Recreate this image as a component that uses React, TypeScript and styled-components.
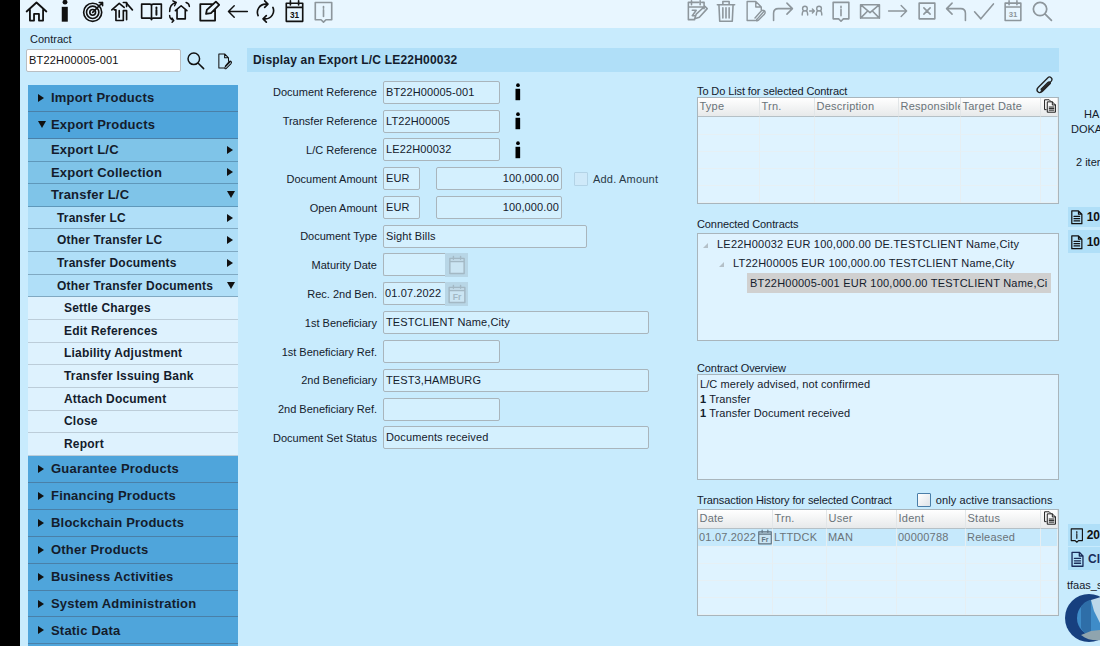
import React from "react";
import styled, { createGlobalStyle, css } from "styled-components";

const GlobalStyle = createGlobalStyle`
  html, body { margin: 0; padding: 0; height: 100%; overflow: hidden; background: #000; }
  body { font-family: "Liberation Sans", Arial, sans-serif; font-size: 11px; color: #14202c; }
`;

const Shell = styled.div`
  display: flex;
  box-sizing: border-box;
  width: 1100px;
  height: 646px;
  padding-left: 20px;
  overflow: hidden;
  background: #000;
`;

const Page = styled.div`
  flex: 1;
  min-width: 0;
  display: flex;
  flex-direction: column;
  background: #c8ebfd;
`;

const Toolbar = styled.header`
  height: 28px;
  flex: none;
  display: flex;
  align-items: flex-start;
  padding: 0 44px 0 2px;
  background: #e8f6ff;
`;

const ToolGroup = styled.div<{ $right?: boolean }>`
  display: flex;
  ${({ $right }) => $right && css`margin-left: auto;`}
`;

const ToolButton = styled.span<{ $muted?: boolean }>`
  width: 28.7px;
  height: 22px;
  display: flex;
  align-items: center;
  justify-content: center;
  color: ${({ $muted }) => ($muted ? "#8d969c" : "#111")};
`;

const Content = styled.div`
  flex: 1;
  min-height: 0;
  display: flex;
`;

const Sidebar = styled.aside`
  width: 227px;
  flex: none;
`;

const ContractLabel = styled.div`
  margin: 5px 0 0 10px;
  height: 12px;
  line-height: 12px;
`;

const ContractRow = styled.div`
  display: flex;
  align-items: center;
  margin: 4px 0 13px 6px;
  color: #111;
`;

const ContractInput = styled.div`
  box-sizing: border-box;
  width: 155px;
  height: 23px;
  line-height: 20px;
  padding-left: 2px;
  background: #fff;
  border: 1.5px solid #b9bec2;
  border-radius: 2px;
  letter-spacing: 0.2px;
`;

const SearchSlot = styled.span`
  display: flex;
  margin-left: 5px;
`;

const DocSlot = styled.span`
  display: flex;
  margin-left: 10px;
`;

const Menu = styled.nav`
  margin-left: 8px;
  width: 210px;
`;

const levelStyles = {
  0: css`height: 26.95px; background: #4fa5db; padding-left: 23px; font-size: 13px;`,
  1: css`height: 22.65px; background: #7fc4e8; padding-left: 23px; font-size: 13px;`,
  2: css`height: 22.65px; background: #b0dff8; padding-left: 29px; font-size: 12px;`,
  3: css`height: 22.65px; background: #def2fe; padding-left: 36px; font-size: 12px;`,
};

const MenuRow = styled.div<{ $level: 0 | 1 | 2 | 3 }>`
  box-sizing: border-box;
  position: relative;
  display: flex;
  align-items: center;
  font-weight: bold;
  letter-spacing: 0.2px;
  color: #141c2c;
  ${({ $level }) => levelStyles[$level]}
  border-bottom: 1.5px solid ${({ $level }) =>
    $level === 0 ? "#4a80a8" : $level === 1 ? "#5f98ba" : $level === 2 ? "#80a9c2" : "#bccdd9"};
`;

const Arrow = styled.i<{ $open?: boolean; $side?: boolean }>`
  position: absolute;
  width: 0;
  height: 0;
  top: 50%;
  ${({ $side, $open }) => ($side ? css`right: ${$open ? 3 : 5}px;` : css`left: 10px;`)}
  ${({ $open }) =>
    $open
      ? css`
          border-left: 4.5px solid transparent;
          border-right: 4.5px solid transparent;
          border-top: 7px solid #111;
          transform: translateY(-4px);
        `
      : css`
          border-top: 4px solid transparent;
          border-bottom: 4px solid transparent;
          border-left: 6.5px solid #111;
          transform: translateY(-4px);
        `}
`;

const Main = styled.main`
  width: 812px;
  flex: none;
`;

const TitleBar = styled.h1`
  margin: 20px 0 0;
  height: 24px;
  line-height: 24px;
  padding-left: 6px;
  background: #b0dff8;
  font-size: 12px;
  font-weight: bold;
  letter-spacing: 0.2px;
  color: #141c2c;
`;

const Columns = styled.div`
  display: flex;
`;

const FormColumn = styled.section`
  width: 450px;
  flex: none;
  padding-top: 6px;
`;

const FormRow = styled.div`
  height: 28.8px;
  display: flex;
  align-items: center;
`;

const FieldLabel = styled.label`
  width: 130px;
  flex: none;
  text-align: right;
  margin-right: 6px;
`;

const Field = styled.div<{ $w: number; $right?: boolean }>`
  box-sizing: border-box;
  width: ${({ $w }) => $w}px;
  height: 23px;
  line-height: 20px;
  padding: 0 2px;
  background: #d4f0fe;
  border: 1.5px solid #a9b5bc;
  border-radius: 2px;
  letter-spacing: 0.12px;
  white-space: nowrap;
  text-align: ${({ $right }) => ($right ? "right" : "left")};
`;

const InfoMark = styled.span`
  display: flex;
  margin-left: 8px;
  color: #000;
`;

const AmountGap = styled.span`
  width: 16px;
  flex: none;
`;

const Check = styled.span<{ $strong?: boolean }>`
  box-sizing: border-box;
  display: inline-block;
  width: 14px;
  height: 14px;
  flex: none;
  border: 1.5px solid ${({ $strong }) => ($strong ? "#4a7ea8" : "#b3d3e6")};
  border-radius: 1px;
  background: ${({ $strong }) => ($strong ? "linear-gradient(135deg,#fff,#dde3e8)" : "#cfe9f9")};
`;

const AddAmount = styled.div`
  display: flex;
  align-items: center;
  margin-left: 12px;
  gap: 5px;
  letter-spacing: 0.2px;
  color: #2a3a48;
`;

const DateWrap = styled.div`
  display: flex;
`;

const DateField = styled(Field)`
  border-radius: 2px 0 0 2px;
  border-right: none;
  padding: 0 1px;
`;

const DateButton = styled.span`
  box-sizing: border-box;
  width: 23px;
  height: 24px;
  display: flex;
  align-items: center;
  justify-content: center;
  background: #b8d6e6;
  color: #a3b8c4;
`;

const RightColumn = styled.section`
  width: 362px;
  flex: none;
`;

const TopLabelRow = styled.div`
  height: 25px;
  display: flex;
  align-items: flex-end;
  justify-content: space-between;
`;

const PanelLabel = styled.div<{ $mt?: number }>`
  height: 12px;
  line-height: 12px;
  letter-spacing: -0.1px;
  white-space: nowrap;
  margin-top: ${({ $mt }) => $mt ?? 0}px;
`;

const ClipSlot = styled.span`
  display: flex;
  margin: 0 5px 3px 0;
  color: #222;
`;

const TableBox = styled.div<{ $cols: string }>`
  box-sizing: border-box;
  height: 107px;
  display: grid;
  grid-template-columns: ${({ $cols }) => $cols};
  grid-template-rows: 19px 17.5px repeat(4, 1fr);
  border: 1.5px solid #a9b5bc;
  background: #dff3ff;
  color: #6a7379;
  overflow: hidden;
`;

const HeadCell = styled.div`
  display: flex;
  align-items: center;
  padding: 0 0 2px 1.5px;
  overflow: hidden;
  white-space: nowrap;
  letter-spacing: 0.25px;
  background: linear-gradient(#fff, #e7e9ea);
  border-right: 1.5px solid #e2e6e8;
  border-bottom: 1.5px solid #b5c0c6;
`;

const BodyCell = styled.div<{ $active?: boolean }>`
  display: flex;
  align-items: center;
  padding-left: 1px;
  overflow: hidden;
  white-space: nowrap;
  letter-spacing: 0.2px;
  background: ${({ $active }) => ($active ? "#c6e9fc" : "transparent")};
  border-right: 1.5px solid #e6eef2;
  border-bottom: 1px solid #e6f0f5;
`;

const DateStamp = styled.span`
  display: flex;
  margin-left: 1px;
  color: #5f7280;
`;

const CopySlot = styled.span`
  display: flex;
  justify-content: center;
  width: 100%;
  color: #111;
`;

const InfoBox = styled.div<{ $h: number; $mt?: number }>`
  box-sizing: border-box;
  height: ${({ $h }) => $h}px;
  margin-top: ${({ $mt }) => $mt ?? 0}px;
  background: #dff3ff;
  border: 1.5px solid #a9b5bc;
  overflow: hidden;
`;

const TreeList = styled.div`
  padding-top: 1px;
`;

const TreeRow = styled.div<{ $indent: number; $selected?: boolean }>`
  box-sizing: border-box;
  height: 19px;
  line-height: 19px;
  margin-left: ${({ $indent }) => $indent}px;
  padding-left: ${({ $selected }) => ($selected ? 3 : 0)}px;
  letter-spacing: 0.22px;
  white-space: nowrap;
  overflow: hidden;
  ${({ $selected }) => $selected && css`
    width: 304px;
    height: 20px;
    line-height: 20px;
    background: #d0d0d0;
  `}
`;

const SelectedText = styled.span`
  display: block;
  width: 298px;
  overflow: hidden;
`;

const TreeToggle = styled.i`
  display: inline-block;
  width: 0;
  height: 0;
  margin-right: 9px;
  border-bottom: 5px solid #b4c0c8;
  border-left: 5px solid transparent;
`;

const OverviewText = styled.div`
  padding: 2px 2px;
  line-height: 14.5px;
  letter-spacing: 0.1px;
  b { font-weight: bold; }
`;

const HistoryHead = styled.div`
  display: flex;
  align-items: center;
  height: 15px;
  margin: 12px 0 2px;
`;

const ActiveOnly = styled.div`
  display: flex;
  align-items: center;
  flex: none;
  margin-left: 25px;
  gap: 5px;
  letter-spacing: 0.1px;
  white-space: nowrap;
`;

const Rail = styled.aside`
  flex: 1;
  min-width: 0;
  overflow: hidden;
  white-space: nowrap;
  padding-top: 79px;
`;

const RailText = styled.div<{ $indent: number; $mt?: number }>`
  height: 14px;
  line-height: 14px;
  margin-left: ${({ $indent }) => $indent}px;
  margin-top: ${({ $mt }) => $mt ?? 0}px;
`;

const RailItem = styled.div<{ $mt: number; $h: number; $blue?: boolean }>`
  display: flex;
  align-items: center;
  height: ${({ $h }) => $h}px;
  margin: ${({ $mt }) => $mt}px 0 0 9px;
  padding-left: 1px;
  gap: 2px;
  background: #b0dff8;
  font-size: 12px;
  font-weight: bold;
  color: ${({ $blue }) => ($blue ? "#1a2c5a" : "#111")};
`;

const RailLogo = styled.span`
  display: block;
  margin: 2px 0 0 6px;
`;

type IconProps = { name: string; size?: number };

const paths: Record<string, React.ReactNode> = {
  home: <path d="M2 14 14 3l12 11M6 12v13h5v-8h6v8h5V12" strokeWidth="2.2" />,
  info: (
    <>
      <circle cx="14" cy="4.5" r="2.6" fill="currentColor" stroke="none" />
      <path d="M10.5 9.5h6.5v16h-6.5z" fill="currentColor" stroke="none" />
    </>
  ),
  target: (
    <>
      <circle cx="13" cy="15" r="11" strokeWidth="2" />
      <circle cx="13" cy="15" r="7.5" strokeWidth="2" />
      <circle cx="13" cy="15" r="3.5" strokeWidth="2" />
      <path d="M13 15 25 3M21 3h4v4" strokeWidth="2" />
    </>
  ),
  houseInfo: (
    <>
      <path d="M1 12 10 4l6 5M4 12h2v13h9V13h4v11M19 4l7 8" strokeWidth="2" />
      <path d="M10 13v8M19 8V3h-4" strokeWidth="2" />
    </>
  ),
  book: (
    <>
      <path d="M2 5h10c1 0 2 1 2 2v17c0-1-1-2-2-2H2zM26 5H16c-1 0-2 1-2 2v17c0-1 1-2 2-2h10z" strokeWidth="2" />
      <path d="M20 9v1M20 12v6" strokeWidth="2.4" />
    </>
  ),
  homeSync: (
    <>
      <path d="M9 13l7-6 7 6M11 12v11h10V12" strokeWidth="2" />
      <path d="M2 14c0-6 3-10 8-11M6 1l4 2-2 4M26 8c0-2-1-4-4-5M2 19c0 3 2 5 5 6M5 27l2-2-2-3" strokeWidth="1.8" />
    </>
  ),
  edit: <path d="M20 5H4v20h18V12M11 17l1-5L23 2l4 4-10 10z" strokeWidth="2.2" />,
  back: <path d="M26 14H3M10 7l-7 7 7 7" strokeWidth="1.8" />,
  refresh: <path d="M5 19A10 10 0 0 1 14 5h3M13 1l4 4-4 4M23 9a10 10 0 0 1-9 14h-3M15 27l-4-4 4-4" strokeWidth="2" />,
  calendar: (
    <>
      <path d="M4 4h20v22H4zM4 9h20M9 1v5M19 1v5" strokeWidth="2" />
      <text x="14" y="22" fontSize="10" fontWeight="bold" textAnchor="middle" fill="currentColor" stroke="none" fontFamily="Liberation Sans">31</text>
    </>
  ),
  infoBubble: <path d="M4 3h20v21h-7l-3 3-3-3H4zM14 8v2M14 12v8" strokeWidth="2" />,
  calendarEdit: <path d="M20 3h3v8M3 3h13M3 3v22h8M3 9h20M7 1v5M18 1v5M11 24l2-6L24 8l3 3-10 11zM8 13h5l-5 7h4" strokeWidth="2" />,
  trash: <path d="M3 6h22M10 6V2h8v4M5 6l1 21h16l1-21M10 10v13M14 10v13M18 10v13" strokeWidth="2" />,
  docClip: <path d="M14 26H4V2h11l7 7v4M15 2v7h7M25 15l-8 9c-3 3-1 3 1 2l8-8c3-4-2-7-5-3l-7 8" strokeWidth="1.8" />,
  redo: <path d="M2 26V17c0-4 2-6 6-6h17M19 4l7 7-7 7" strokeWidth="2" />,
  transfer: (
    <>
      <circle cx="5" cy="11" r="3" strokeWidth="1.8" />
      <path d="M1.5 19c0-3 1-5 2-5.5M8.5 19c0-3-1-5-2-5.5M11 14h6M14.5 11.5 17 14l-2.5 2.5" strokeWidth="1.8" />
      <circle cx="23" cy="11" r="3" strokeWidth="1.8" />
      <path d="M19.5 19c0-3 1-5 2-5.5M26.500 19c0-3-1-5-2-5.5" strokeWidth="1.8" />
    </>
  ),
  mail: <path d="M2 6h24v17H2zM2 6l12 10L26 6M2 23l9-9M26 23l-9-9" strokeWidth="2" />,
  forward: <path d="M2 14h23M18 7l7 7-7 7" strokeWidth="1.8" />,
  cross: <path d="M4 4h20v20H4zM10 10l8 8M18 10l-8 8" strokeWidth="2" />,
  undo: <path d="M26 26V17c0-4-2-6-6-6H3M9 4l-7 7 7 7" strokeWidth="2" />,
  check: <path d="M2 15l8 9L26 5" strokeWidth="2" />,
  search: <path d="M11.5 3a8.5 8.5 0 1 0 0 17 8.5 8.5 0 0 0 0-17zM18 18l8 8" strokeWidth="2.2" />,
  docAttach: <path d="M14 25H6V3h9l6 6v5M15 3v6h6M24 15l-8 8c-2 3 0 4 2 2l7-7c2-3-1-5-3-3l-6 7" strokeWidth="1.6" />,
  clip: <path d="M9 24 24 9c3-4-2-8-5-5L5 18c-5 5 1 11 6 6L22 13c2-2-1-4-3-2L9 21" strokeWidth="2" />,
  copy: <path d="M6 21H3V2h9l3 3M9 6h9l6 6v14H9zM18 6v6h6M12 16h9M12 19h9M12 22h9" strokeWidth="1.8" />,
  doc: <path d="M5 3h12l6 6v17H5zM17 3v6h6M9 13h10M9 17h10M9 21h10" strokeWidth="2.2" />,
  calendarBare: <path d="M4 5h20v21H4zM4 9h20M9 2v4M19 2v4" strokeWidth="2" fill="#cbe5f3" />,
  calendarFr: (
    <>
      <path d="M3 5h22v21H3zM3 9h22M9 2v4M19 2v4" strokeWidth="2" fill="#cbe5f3" />
      <text x="14" y="23" fontSize="12" fontWeight="bold" textAnchor="middle" fill="currentColor" stroke="none" fontFamily="Liberation Sans">Fr</text>
    </>
  ),
};

const Icon = ({ name, size = 24 }: IconProps) => (
  <svg width={size} height={size} viewBox="0 0 28 28" fill="none" stroke="currentColor" strokeLinecap="round" strokeLinejoin="round">
    {paths[name]}
  </svg>
);

const leftTools = ["home", "info", "target", "houseInfo", "book", "homeSync", "edit", "back", "refresh", "calendar", "infoBubble"];
const rightTools = ["calendarEdit", "trash", "docClip", "redo", "transfer", "infoBubble", "mail", "forward", "cross", "undo", "check", "calendar", "search"];

const menu: { label: string; level: 0 | 1 | 2 | 3; arrow?: "side" | "sideOpen" | "lead" | "leadOpen" }[] = [
  { label: "Import Products", level: 0, arrow: "lead" },
  { label: "Export Products", level: 0, arrow: "leadOpen" },
  { label: "Export L/C", level: 1, arrow: "side" },
  { label: "Export Collection", level: 1, arrow: "side" },
  { label: "Transfer L/C", level: 1, arrow: "sideOpen" },
  { label: "Transfer LC", level: 2, arrow: "side" },
  { label: "Other Transfer LC", level: 2, arrow: "side" },
  { label: "Transfer Documents", level: 2, arrow: "side" },
  { label: "Other Transfer Documents", level: 2, arrow: "sideOpen" },
  { label: "Settle Charges", level: 3 },
  { label: "Edit References", level: 3 },
  { label: "Liability Adjustment", level: 3 },
  { label: "Transfer Issuing Bank", level: 3 },
  { label: "Attach Document", level: 3 },
  { label: "Close", level: 3 },
  { label: "Report", level: 3 },
  { label: "Guarantee Products", level: 0, arrow: "lead" },
  { label: "Financing Products", level: 0, arrow: "lead" },
  { label: "Blockchain Products", level: 0, arrow: "lead" },
  { label: "Other Products", level: 0, arrow: "lead" },
  { label: "Business Activities", level: 0, arrow: "lead" },
  { label: "System Administration", level: 0, arrow: "lead" },
  { label: "Static Data", level: 0, arrow: "lead" },
  { label: "", level: 0 },
];

const todoCols = "62px 55px 84px 62px 80px 1fr";
const historyCols = "75px 54px 70px 69px 75px 1fr";

const DataTable = ({ cols, heads, row }: { cols: string; heads: string[]; row?: React.ReactNode[] }) => (
  <TableBox $cols={cols}>
    {heads.map((h) => (
      <HeadCell key={h}>{h}</HeadCell>
    ))}
    <HeadCell>
      <CopySlot>
        <Icon name="copy" size={18} />
      </CopySlot>
    </HeadCell>
    {Array.from({ length: 5 * (heads.length + 1) }, (_, i) => {
      const inFirst = i <= heads.length;
      return (
        <BodyCell key={i} $active={inFirst && !!row}>
          {inFirst && row ? row[i] : null}
        </BodyCell>
      );
    })}
  </TableBox>
);

export default function App() {
  return (
    <Shell>
      <GlobalStyle />
      <Page>
        <Toolbar>
          <ToolGroup>
            {leftTools.map((t) => (
              <ToolButton key={t} $muted={t === "infoBubble"}>
                <Icon name={t} size={t === "info" ? 26 : 23} />
              </ToolButton>
            ))}
          </ToolGroup>
          <ToolGroup $right>
            {rightTools.map((t, i) => (
              <ToolButton key={t + i} $muted>
                <Icon name={t} size={22} />
              </ToolButton>
            ))}
          </ToolGroup>
        </Toolbar>
        <Content>
          <Sidebar>
            <ContractLabel>Contract</ContractLabel>
            <ContractRow>
              <ContractInput>BT22H00005-001</ContractInput>
              <SearchSlot>
                <Icon name="search" size={19} />
              </SearchSlot>
              <DocSlot>
                <Icon name="docAttach" size={18} />
              </DocSlot>
            </ContractRow>
            <Menu>
              {menu.map((m, i) => (
                <MenuRow key={i} $level={m.level}>
                  {m.arrow && <Arrow $open={m.arrow.endsWith("Open")} $side={m.arrow.startsWith("side")} />}
                  {m.label}
                </MenuRow>
              ))}
            </Menu>
          </Sidebar>
          <Main>
            <TitleBar>Display an Export L/C LE22H00032</TitleBar>
            <Columns>
              <FormColumn>
                <FormRow>
                  <FieldLabel>Document Reference</FieldLabel>
                  <Field $w={117}>BT22H00005-001</Field>
                  <InfoMark><Icon name="info" size={20} /></InfoMark>
                </FormRow>
                <FormRow>
                  <FieldLabel>Transfer Reference</FieldLabel>
                  <Field $w={117}>LT22H00005</Field>
                  <InfoMark><Icon name="info" size={20} /></InfoMark>
                </FormRow>
                <FormRow>
                  <FieldLabel>L/C Reference</FieldLabel>
                  <Field $w={117}>LE22H00032</Field>
                  <InfoMark><Icon name="info" size={20} /></InfoMark>
                </FormRow>
                <FormRow>
                  <FieldLabel>Document Amount</FieldLabel>
                  <Field $w={37}>EUR</Field>
                  <AmountGap />
                  <Field $w={126} $right>100,000.00</Field>
                  <AddAmount>
                    <Check />
                    Add. Amount
                  </AddAmount>
                </FormRow>
                <FormRow>
                  <FieldLabel>Open Amount</FieldLabel>
                  <Field $w={37}>EUR</Field>
                  <AmountGap />
                  <Field $w={126} $right>100,000.00</Field>
                </FormRow>
                <FormRow>
                  <FieldLabel>Document Type</FieldLabel>
                  <Field $w={204}>Sight Bills</Field>
                </FormRow>
                <FormRow>
                  <FieldLabel>Maturity Date</FieldLabel>
                  <DateWrap>
                    <DateField $w={62} />
                    <DateButton><Icon name="calendarBare" size={20} /></DateButton>
                  </DateWrap>
                </FormRow>
                <FormRow>
                  <FieldLabel>Rec. 2nd Ben.</FieldLabel>
                  <DateWrap>
                    <DateField $w={62}>01.07.2022</DateField>
                    <DateButton><Icon name="calendarFr" size={20} /></DateButton>
                  </DateWrap>
                </FormRow>
                <FormRow>
                  <FieldLabel>1st Beneficiary</FieldLabel>
                  <Field $w={266}>TESTCLIENT Name,City</Field>
                </FormRow>
                <FormRow>
                  <FieldLabel>1st Beneficiary Ref.</FieldLabel>
                  <Field $w={117} />
                </FormRow>
                <FormRow>
                  <FieldLabel>2nd Beneficiary</FieldLabel>
                  <Field $w={266}>TEST3,HAMBURG</Field>
                </FormRow>
                <FormRow>
                  <FieldLabel>2nd Beneficiary Ref.</FieldLabel>
                  <Field $w={117} />
                </FormRow>
                <FormRow>
                  <FieldLabel>Document Set Status</FieldLabel>
                  <Field $w={266}>Documents received</Field>
                </FormRow>
              </FormColumn>
              <RightColumn>
                <TopLabelRow>
                  <PanelLabel>To Do List for selected Contract</PanelLabel>
                  <ClipSlot><Icon name="clip" size={19} /></ClipSlot>
                </TopLabelRow>
                <DataTable cols={todoCols} heads={["Type", "Trn.", "Description", "Responsible", "Target Date"]} />
                <PanelLabel $mt={14}>Connected Contracts</PanelLabel>
                <InfoBox $h={108} $mt={3}>
                  <TreeList>
                    <TreeRow $indent={5}><TreeToggle />LE22H00032 EUR 100,000.00 DE.TESTCLIENT Name,City</TreeRow>
                    <TreeRow $indent={21}><TreeToggle />LT22H00005 EUR 100,000.00 TESTCLIENT Name,City</TreeRow>
                    <TreeRow $indent={49} $selected>
                      <SelectedText>BT22H00005-001 EUR 100,000.00 TESTCLIENT Name,Ci</SelectedText>
                    </TreeRow>
                  </TreeList>
                </InfoBox>
                <PanelLabel $mt={21}>Contract Overview</PanelLabel>
                <InfoBox $h={106}>
                  <OverviewText>
                    L/C merely advised, not confirmed
                    <br />
                    <b>1</b> Transfer
                    <br />
                    <b>1</b> Transfer Document received
                  </OverviewText>
                </InfoBox>
                <HistoryHead>
                  <PanelLabel>Transaction History for selected Contract</PanelLabel>
                  <ActiveOnly>
                    <Check $strong />
                    only active transactions
                  </ActiveOnly>
                </HistoryHead>
                <DataTable
                  cols={historyCols}
                  heads={["Date", "Trn.", "User", "Ident", "Status"]}
                  row={[
                    <>
                      01.07.2022
                      <DateStamp><Icon name="calendarFr" size={16} /></DateStamp>
                    </>,
                    "LTTDCK",
                    "MAN",
                    "00000788",
                    "Released",
                    "",
                  ]}
                />
              </RightColumn>
            </Columns>
          </Main>
          <Rail>
            <RailText $indent={25}>HA</RailText>
            <RailText $indent={12} $mt={1}>DOKA</RailText>
            <RailText $indent={17} $mt={19}>2 item</RailText>
            <RailItem $mt={38} $h={20}>
              <Icon name="doc" size={18} />
              10
            </RailItem>
            <RailItem $mt={3} $h={23}>
              <Icon name="doc" size={18} />
              10
            </RailItem>
            <RailItem $mt={271} $h={22}>
              <Icon name="infoBubble" size={18} />
              20
            </RailItem>
            <RailItem $mt={1} $h={23} $blue>
              <Icon name="doc" size={18} />
              Cl
            </RailItem>
            <RailText $indent={8} $mt={8}>tfaas_s</RailText>
            <RailLogo>
              <svg width="48" height="48" viewBox="0 0 48 48">
                <circle cx="24" cy="24" r="24" fill="#17407f" />
                <circle cx="30" cy="24" r="18" fill="#3f8cc8" />
                <path d="M16 13c3-5 7-7 10-7v36c-4-1-8-4-10-8z" fill="#2e6ea8" />
                <path d="M26 6 36 3v28l-7-14z" fill="#bcd8ea" />
                <path d="M16 41c6 5 14 6 20 5V36l-10 1z" fill="#8fa4ae" />
              </svg>
            </RailLogo>
          </Rail>
        </Content>
      </Page>
    </Shell>
  );
}
